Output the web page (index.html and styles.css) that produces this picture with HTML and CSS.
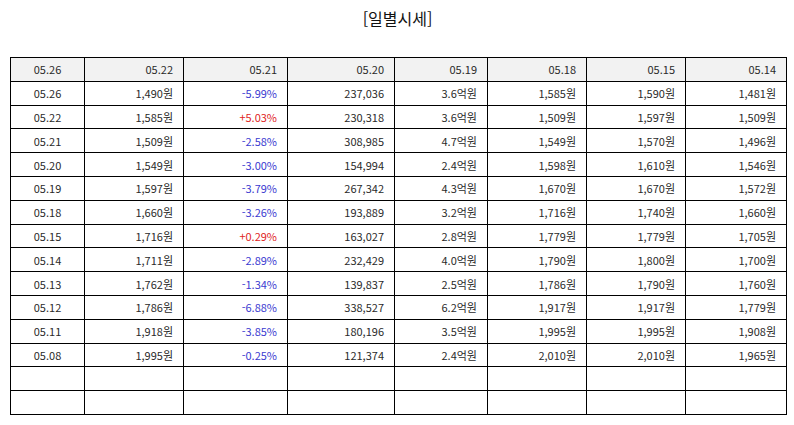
FILE: index.html
```html
<!DOCTYPE html>
<html lang="ko">
<head>
<meta charset="utf-8">
<link rel="stylesheet" href="styles.css">
</head>
<body>
<div class="wrap">
<h1 class="title">[일별시세]</h1>
<table class="grid">
<colgroup>
<col class="c1"><col class="c2"><col class="c3"><col class="c4"><col class="c5"><col class="c6"><col class="c7"><col class="c8">
</colgroup>
<thead>
<tr><th class="ctr">05.26</th><th>05.22</th><th>05.21</th><th>05.20</th><th>05.19</th><th>05.18</th><th>05.15</th><th>05.14</th></tr>
</thead>
<tbody>
<tr><td class="ctr">05.26</td><td>1,490원</td><td class="dn">-5.99%</td><td>237,036</td><td>3.6억원</td><td>1,585원</td><td>1,590원</td><td>1,481원</td></tr>
<tr><td class="ctr">05.22</td><td>1,585원</td><td class="up">+5.03%</td><td>230,318</td><td>3.6억원</td><td>1,509원</td><td>1,597원</td><td>1,509원</td></tr>
<tr><td class="ctr">05.21</td><td>1,509원</td><td class="dn">-2.58%</td><td>308,985</td><td>4.7억원</td><td>1,549원</td><td>1,570원</td><td>1,496원</td></tr>
<tr><td class="ctr">05.20</td><td>1,549원</td><td class="dn">-3.00%</td><td>154,994</td><td>2.4억원</td><td>1,598원</td><td>1,610원</td><td>1,546원</td></tr>
<tr><td class="ctr">05.19</td><td>1,597원</td><td class="dn">-3.79%</td><td>267,342</td><td>4.3억원</td><td>1,670원</td><td>1,670원</td><td>1,572원</td></tr>
<tr><td class="ctr">05.18</td><td>1,660원</td><td class="dn">-3.26%</td><td>193,889</td><td>3.2억원</td><td>1,716원</td><td>1,740원</td><td>1,660원</td></tr>
<tr><td class="ctr">05.15</td><td>1,716원</td><td class="up">+0.29%</td><td>163,027</td><td>2.8억원</td><td>1,779원</td><td>1,779원</td><td>1,705원</td></tr>
<tr><td class="ctr">05.14</td><td>1,711원</td><td class="dn">-2.89%</td><td>232,429</td><td>4.0억원</td><td>1,790원</td><td>1,800원</td><td>1,700원</td></tr>
<tr><td class="ctr">05.13</td><td>1,762원</td><td class="dn">-1.34%</td><td>139,837</td><td>2.5억원</td><td>1,786원</td><td>1,790원</td><td>1,760원</td></tr>
<tr><td class="ctr">05.12</td><td>1,786원</td><td class="dn">-6.88%</td><td>338,527</td><td>6.2억원</td><td>1,917원</td><td>1,917원</td><td>1,779원</td></tr>
<tr><td class="ctr">05.11</td><td>1,918원</td><td class="dn">-3.85%</td><td>180,196</td><td>3.5억원</td><td>1,995원</td><td>1,995원</td><td>1,908원</td></tr>
<tr><td class="ctr">05.08</td><td>1,995원</td><td class="dn">-0.25%</td><td>121,374</td><td>2.4억원</td><td>2,010원</td><td>2,010원</td><td>1,965원</td></tr>
<tr><td></td><td></td><td></td><td></td><td></td><td></td><td></td><td></td></tr>
<tr><td></td><td></td><td></td><td></td><td></td><td></td><td></td><td></td></tr>
</tbody>
</table>
</div>
</body>
</html>
```
FILE: styles.css
```css
html, body {
  margin: 0;
  padding: 0;
  background: #ffffff;
}
body {
  font-family: "Noto Sans CJK KR", "Noto Sans", sans-serif;
  color: #222222;
}
.wrap {
  padding: 8px 9px 0 10px;
}
.title {
  margin: 0;
  height: 49px;
  font-size: 16px;
  font-weight: 400;
  line-height: 20px;
  text-align: center;
  color: #111111;
}
.grid {
  width: 776px;
  border-collapse: collapse;
  table-layout: fixed;
  font-size: 11px;
}
.c1 { width: 74px; }
.c2 { width: 99px; }
.c3 { width: 104px; }
.c4 { width: 107px; }
.c5 { width: 93px; }
.c6 { width: 99px; }
.c7 { width: 99px; }
.c8 { width: 101px; }
.grid th,
.grid td {
  border: 1px solid #000000;
  height: 23.8px;
  padding: 0 10px 0 4px;
  text-align: right;
  font-weight: 400;
  line-height: 14px;
  color: #2a2a2a;
  box-sizing: border-box;
}
.grid th {
  background: #f2f2f2;
}
.grid .ctr {
  text-align: center;
  padding: 0 4px;
}
.grid .dn { color: #3a3ad0; }
.grid .up { color: #e02424; }
```
